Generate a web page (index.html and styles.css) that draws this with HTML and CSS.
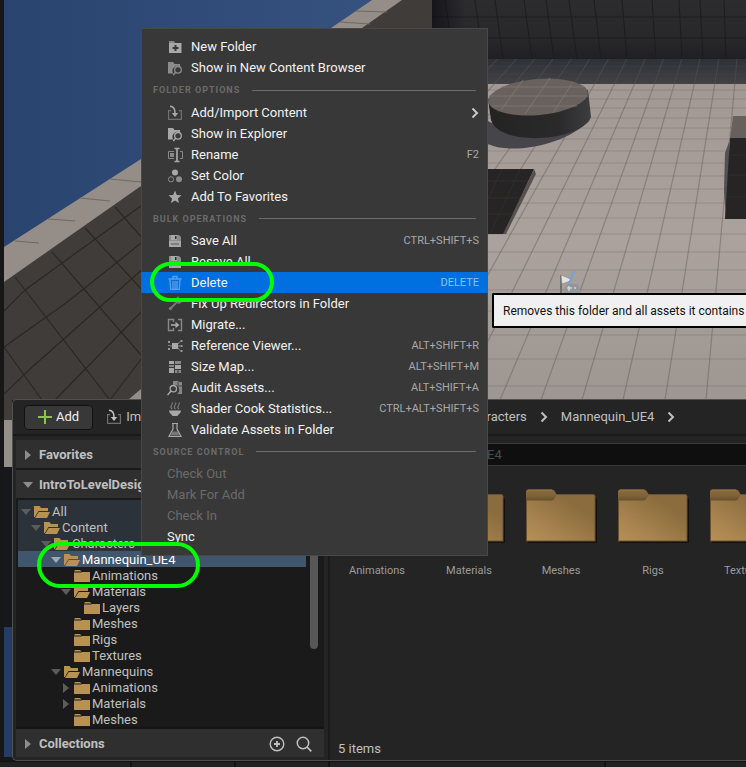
FILE: index.html
```html
<!DOCTYPE html>
<html lang="en">
<head>
<meta charset="utf-8">
<meta name="viewport" content="width=device-width, initial-scale=1">
<title>Content Browser</title>
<link rel="stylesheet" href="styles.css">
</head>
<body>
<svg class="defs" aria-hidden="true">
  <defs>
    <linearGradient id="tile-fill" x1="0" y1="1" x2="1" y2="0"><stop offset="0" stop-color="#b68f57"/><stop offset=".25" stop-color="#a98550"/><stop offset=".75" stop-color="#8b6c3e"/><stop offset="1" stop-color="#8b6c3e"/></linearGradient>
    <linearGradient id="tab-fill" x1="0" y1="0" x2="0" y2="1"><stop offset="0" stop-color="#8b6c3e"/><stop offset=".6" stop-color="#7d6138"/><stop offset="1" stop-color="#67502d"/></linearGradient>
    <symbol id="folder" viewBox="0 0 16 14"><path fill="#b89154" d="M0 3.500H7L8 3H16V13H0z"/><path fill="#b89154" d="M1 1H6L7.500 2.500H0z"/></symbol>
    <symbol id="folder-open" viewBox="0 0 16 14"><path fill="#b89154" d="M0 12V1H5.500L7 3H14V6H4.500L.8 12zM1 13L4.800 7H16L13 13z"/></symbol>
    <symbol id="tile" viewBox="0 0 72 54"><path fill="#111" d="M3 9H70.500L72 10V54H3z"/><path fill="#6b522e" d="M1 5H69l1.500 2V52.500H1z"/><path fill="url(#tile-fill)" d="M2 6H68.500l1 1V51.500H2z"/><path fill="url(#tab-fill)" d="M1 11V3q0-2.500 2.500-2.500H27q1.500 0 2.500 1.500L32 6l-2.500 3.500Q28.500 11.500 27 11.500H1z"/><path fill="none" stroke="#a58351" stroke-width=".6" d="M2 2Q2.500 1 4 1H27"/></symbol>
    <symbol id="import" viewBox="0 0 16 16"><path fill="none" stroke="#707070" stroke-width="1.200" d="M4 5.600H1.600V14.400H14.400V5.600H12"/><path fill="none" stroke="currentColor" stroke-width="1.500" d="M3 1.200Q8 1.500 8 8v3"/><path fill="currentColor" d="M4.800 8h6.400L8 12z"/></symbol>
    <symbol id="search-folder" viewBox="0 0 16 16"><path fill="currentColor" d="M1 2h5l1.500 2H13v2.500A5 5 0 0 0 6 13l-.5.500H1z"/><circle cx="11" cy="9.800" r="3.300" fill="none" stroke="currentColor" stroke-width="1.300"/><path stroke="currentColor" stroke-width="1.500" d="M8.700 12.200L6.200 15"/></symbol>
    <symbol id="save" viewBox="0 0 16 16"><path fill="#8c8c8c" d="M2 2H12L14 4V14H2z"/><path fill="currentColor" d="M2 8H14V14H2zM4 2H10V7H4z"/><path fill="#2c2c2c" d="M8 3h1.500v3H8z"/><path fill="#555" d="M4 10.500h8v1H4z"/></symbol>
    <symbol id="chevron" viewBox="0 0 8 12"><path fill="none" stroke="currentColor" stroke-width="2" d="M1.500 1.500L6 6l-4.500 4.500"/></symbol>
  </defs>
</svg>
<div class="app">
  <svg class="scene" viewBox="0 0 746 767" preserveAspectRatio="xMinYMin slice" aria-hidden="true">
    <defs>
      <linearGradient id="sky" x1="0" y1="0" x2="1" y2="0"><stop offset="0" stop-color="#29446f"/><stop offset="1" stop-color="#36527f"/></linearGradient>
      <linearGradient id="back" x1="0" y1="0" x2="0" y2="1"><stop offset="0" stop-color="#2c2c2f"/><stop offset=".65" stop-color="#28282b"/><stop offset="1" stop-color="#202024"/></linearGradient>
      <linearGradient id="shade" x1="0" y1="0" x2="0" y2="1"><stop offset="0" stop-color="#303136"/><stop offset="1" stop-color="#414146"/></linearGradient>
      <linearGradient id="ground" x1="0" y1="0" x2="0" y2="1"><stop offset="0" stop-color="#a29994"/><stop offset=".5" stop-color="#aba29d"/><stop offset="1" stop-color="#9e9691"/></linearGradient>
      <linearGradient id="drum" x1="0" y1="0" x2="1" y2="0"><stop offset="0" stop-color="#242324"/><stop offset=".7" stop-color="#2b2a2b"/><stop offset="1" stop-color="#3d3d40"/></linearGradient>
      <linearGradient id="corner" x1="0" y1="0" x2="1" y2="0"><stop offset="0" stop-color="#0c0c12" stop-opacity=".7"/><stop offset="1" stop-color="#0c0c12" stop-opacity="0"/></linearGradient>
      <clipPath id="ground-clip"><path d="M432 59H746V400H432z"/></clipPath>
      <clipPath id="wall-clip"><path d="M4 282L141 186 380 18V400H4z"/></clipPath>
    </defs>
    <path fill="#171717" d="M0 0H746V767H0z"/>
    <path fill="url(#sky)" d="M4 0H380V260H4z"/>
    <path fill="#403c3a" d="M4 280L141 186 400 0H432V400H4z"/>
    <path fill="#958d87" d="M4 247L141 159 331 28 372 0H402L362 28 141 186 4 282z"/>
    <path stroke="#6f6863" d="M15 241l24 2M48 219l27 2M80 198l30 3M110 179l31 3M340 22l30 2M355 11l32 1" fill="none"/>
    <g clip-path="url(#wall-clip)" fill="none" stroke="#2a2725" stroke-width="1.200">
      <path d="M15 277L110 400M52 252L160 377M85 228L145 293M115 207L150 247M4 347L66 303 145 240M4 311L25 290 145 203M55 400L145 308M4 394L30 369 145 267M4 347L42 400M110 400L145 354"/>
    </g>
    <path fill="#958d87" d="M128 400L141 389V400z"/>
    <path fill="url(#back)" d="M432 0H746V59H432z"/>
    <path fill="url(#shade)" d="M432 59H746V84H432z"/>
    <path fill="url(#ground)" d="M432 84H746V400H432z"/>
    <path fill="none" stroke="#1d1d20" d="M432 17H746M432 38H746M445 0l9 59M475 0l8 59M495 0l8 59M524 0l8 59M546 0l8 59M569 0l8 59M594 0l7 59M622 0l5 59M652 0l4 59M679 0l3 59M700 0l3 59M724 0l2 59"/>
    <g clip-path="url(#ground-clip)" fill="none" stroke="#5c5553">
      <path stroke-opacity=".42" stroke-width="1.200" d="M762-216L6 400M762-216L47 400M762-216L88 400M762-216L129 400M762-216L170 400M762-216L212 400M762-216L253 400M762-216L294 400M762-216L335 400M762-216L376 400M762-216L418 400M762-216L459 400M762-216L500 400M762-216L541 400M762-216L582 400M762-216L623 400M762-216L665 400M762-216L706 400M762-216L747 400"/>
      <path stroke-opacity=".25" d="M432 66H746M432 74H746M432 90H746M432 99H746M432 108H746M432 118H746M432 128H746M432 139H746M432 151H746M432 163H746M432 176H746M432 189H746M432 203H746M432 218H746M432 234H746M432 252H746M432 270H746M432 290H746M432 311H746M432 335H746M432 359H746M432 386H746"/>
    </g>
    <path fill="#46464a" d="M488 121C500 130 565 132 590 120 565 146 510 155 488 144z"/>
    <path fill="url(#drum)" d="M488 99L491 120C500 148 582 141 591 117L588 90z"/>
    <ellipse cx="538" cy="97" rx="50" ry="18" transform="rotate(-5 538 97)" fill="#69615d"/>
    <path stroke="#7e7570" fill="none" d="M523 80L501 110M550 78L525 114M573 82L553 113M502 87H584M489 96H588M492 106H577"/>
    <path fill="#262424" d="M488 169H534L504 234H488z"/><path fill="#57514e" d="M534 169l2 5-30 60h-3z"/>
    <path fill="none" stroke="#302d2c" d="M488 181H528M488 198H520M488 214H513M502 169l-14 30M520 169l-30 65"/>
    <path fill="#505055" d="M729 142L725 153 724 190 726 218 731 218z"/>
    <path fill="#68605c" d="M733 116H746V139H730z"/><path fill="#262424" d="M730 138H746V219H725z"/>
    <path stroke="#302d2c" d="M730 155H746M729 175H746M727 197H746"/>
    <path fill="url(#corner)" d="M432 0H465V59H432z"/>
    <path fill="none" stroke="#74716f" stroke-width="2" d="M561 275v18"/><path fill="#e4e2e0" stroke="#8a8785" stroke-width=".6" d="M561 275l12 5-11 4z"/><path stroke="#6fa3dd" stroke-width="2" d="M569 284l5-13"/>
    <path fill="#92979b" d="M564 294q1-9 4-10h8q4 1 5 10z"/><path stroke="#eee" d="M567 288h5M569 286v5M574 288h2"/>
    <path fill="#403c3a" d="M4 400H12V430H4z"/><path fill="#968e88" d="M4 420H12V467H4z"/><path fill="#17181b" d="M4 467H12V627H4z"/><path fill="#233d66" d="M4 627H12V757H4z"/>
  </svg>

  <div class="viewport"></div>

  <section class="drawer" aria-label="Content Browser">
    <header class="toolbar">
      <button class="add" type="button"><svg width="14" height="14" viewBox="0 0 14 14"><path stroke="#8bc24a" stroke-width="2" d="M7 0V14M0 7H14"/></svg>Add</button>
      <button class="import" type="button"><svg width="16" height="16"><use href="#import"/></svg>Import</button>
      <nav class="crumbs" aria-label="Path">
        <a href="#">Characters</a><svg width="8" height="12"><use href="#chevron"/></svg>
        <a href="#">Mannequin_UE4</a><svg width="8" height="12"><use href="#chevron"/></svg>
      </nav>
    </header>
    <div class="body">
      <aside class="sidebar">
        <button class="group" type="button"><i class="tri right"></i>Favorites</button>
        <button class="group" type="button"><i class="tri down"></i>IntroToLevelDesign</button>
        <div class="tree-box">
          <ul class="tree">
            <li class="row l0 ancestor"><i class="tri down"></i><svg><use href="#folder-open"/></svg>All</li>
            <li class="row l1 ancestor"><i class="tri down"></i><svg><use href="#folder-open"/></svg>Content</li>
            <li class="row l2 ancestor"><i class="tri down"></i><svg><use href="#folder-open"/></svg>Characters</li>
            <li class="row l3 selected"><i class="tri down"></i><svg><use href="#folder-open"/></svg>Mannequin_UE4</li>
            <li class="row l4"><i class="tri"></i><svg><use href="#folder"/></svg>Animations</li>
            <li class="row l4"><i class="tri down"></i><svg><use href="#folder-open"/></svg>Materials</li>
            <li class="row l5"><i class="tri"></i><svg><use href="#folder"/></svg>Layers</li>
            <li class="row l4"><i class="tri"></i><svg><use href="#folder"/></svg>Meshes</li>
            <li class="row l4"><i class="tri"></i><svg><use href="#folder"/></svg>Rigs</li>
            <li class="row l4"><i class="tri"></i><svg><use href="#folder"/></svg>Textures</li>
            <li class="row l3"><i class="tri down"></i><svg><use href="#folder-open"/></svg>Mannequins</li>
            <li class="row l4"><i class="tri right"></i><svg><use href="#folder"/></svg>Animations</li>
            <li class="row l4"><i class="tri right"></i><svg><use href="#folder"/></svg>Materials</li>
            <li class="row l4"><i class="tri"></i><svg><use href="#folder"/></svg>Meshes</li>
          </ul>
          <div class="scrollbar"></div>
        </div>
        <div class="group">
          <i class="tri right"></i><span class="grow">Collections</span>
          <button class="tool" type="button" aria-label="Add collection"><svg width="16" height="16" viewBox="0 0 16 16"><circle cx="8" cy="8" r="6.800" fill="none" stroke="currentColor" stroke-width="1.400"/><path stroke="currentColor" stroke-width="1.800" d="M8 5v6M5 8h6"/></svg></button>
          <button class="tool" type="button" aria-label="Search collections"><svg width="16" height="16" viewBox="0 0 16 16"><circle cx="7" cy="7" r="5.700" fill="none" stroke="currentColor" stroke-width="1.500"/><path stroke="currentColor" stroke-width="1.700" d="M11 11l4.300 4.300"/></svg></button>
        </div>
      </aside>
      <main class="assets">
        <input class="search" type="text" placeholder="Search Mannequin_UE4" aria-label="Search Mannequin_UE4">
        <ul class="tiles">
          <li><svg><use href="#tile"/></svg>Animations</li>
          <li><svg><use href="#tile"/></svg>Materials</li>
          <li><svg><use href="#tile"/></svg>Meshes</li>
          <li><svg><use href="#tile"/></svg>Rigs</li>
          <li><svg><use href="#tile"/></svg>Textures</li>
        </ul>
        <p class="count">5 items</p>
      </main>
    </div>
  </section>
  <footer class="status"><span></span><span></span><span></span><span></span><span></span></footer>

  <div class="menu" role="menu">
    <button class="item" role="menuitem"><svg viewBox="0 0 16 16"><path fill="#888" d="M2 2h5l1 2H2z"/><path fill="currentColor" fill-rule="evenodd" d="M2 4H14.500V14H2zM7.500 6v2h-2v2h2v2h2v-2h2V8h-2V6z"/></svg>New Folder</button>
    <button class="item" role="menuitem"><svg viewBox="0 0 16 16" class="dim"><use href="#search-folder"/></svg>Show in New Content Browser</button>
    <div class="section first">FOLDER OPTIONS</div>
    <button class="item" role="menuitem"><svg viewBox="0 0 16 16"><use href="#import"/></svg>Add/Import Content<svg class="more"><use href="#chevron"/></svg></button>
    <button class="item" role="menuitem"><svg viewBox="0 0 16 16"><use href="#search-folder"/></svg>Show in Explorer</button>
    <button class="item" role="menuitem"><svg viewBox="0 0 16 16"><path fill="none" stroke="#888" d="M7 4.500H1.500v7H7M13 4.500h2.500v7H13"/><path fill="#888" d="M3 6h4v4H3z"/><path fill="none" stroke="currentColor" stroke-width="1.700" d="M7.500 1.500h5M10 1.500v13M7.500 14.500h5"/></svg>Rename<kbd>F2</kbd></button>
    <button class="item" role="menuitem"><svg viewBox="0 0 16 16"><circle cx="8" cy="4.500" r="3" fill="currentColor"/><circle cx="4" cy="11.300" r="2.600" fill="none" stroke="#8c8c8c"/><circle cx="12" cy="11.300" r="3" fill="#8c8c8c"/></svg>Set Color</button>
    <button class="item" role="menuitem"><svg viewBox="0 0 16 16"><path fill="currentColor" d="M8 1.500l1.800 4.400 4.700.4-3.600 3.100 1.100 4.600L8 11.500 4 14l1.100-4.600L1.500 6.300l4.700-.4z"/></svg>Add To Favorites</button>
    <div class="section">BULK OPERATIONS</div>
    <button class="item" role="menuitem"><svg viewBox="0 0 16 16"><use href="#save"/></svg>Save All<kbd>CTRL+SHIFT+S</kbd></button>
    <button class="item" role="menuitem"><svg viewBox="0 0 16 16"><use href="#save"/></svg>Resave All</button>
    <button class="item active" role="menuitem"><svg viewBox="0 0 16 16"><path fill="none" stroke="currentColor" stroke-width="1.400" d="M1.500 4H14.500M6 3.500V1.500h4v2"/><path fill="none" stroke="currentColor" stroke-width="1.300" d="M3 5l.7 9.300h8.600L13 5M6 6v8M8 6v8M10 6v8"/></svg>Delete<kbd>DELETE</kbd></button>
    <button class="item" role="menuitem"><svg viewBox="0 0 16 16" class="wrench"><path stroke="currentColor" stroke-width="2" d="M3 13l8.500-8.500"/><circle cx="3.500" cy="12.500" r="1.700" fill="currentColor"/><path fill="none" stroke="currentColor" stroke-width="2" d="M14.500 3.500a2.600 2.600 0 1 1-2.500-2"/></svg>Fix Up Redirectors in Folder</button>
    <button class="item" role="menuitem"><svg viewBox="0 0 16 16"><path fill="none" stroke="#888" stroke-width="1.400" d="M6.500 5V2.500H1.500v11h5V11M11 2.500h3.500v11H11"/><path stroke="currentColor" stroke-width="1.600" d="M4 8h6"/><path fill="currentColor" d="M8.500 4.800L12.500 8l-4 3.200z"/></svg>Migrate...</button>
    <button class="item" role="menuitem"><svg viewBox="0 0 16 16"><path fill="currentColor" d="M5 5h6v6H5z"/><path fill="#999" d="M1 3h2v2H1zM1 10h2v2H1zM13.500 2h2v2h-2zM13.500 7h2v2h-2zM13.500 12h2v2h-2z"/><path stroke="#888" fill="none" d="M3 8h2M1 7.500h2M11 8h2M13 3.500L11 6M13 12.500L11 10"/></svg>Reference Viewer...<kbd>ALT+SHIFT+R</kbd></button>
    <button class="item" role="menuitem"><svg viewBox="0 0 16 16"><path fill="currentColor" d="M2 2h5v3H2zM2 9h5v5H2zM8 6h6v4H8z"/><path fill="#888" d="M2 6h5v2H2zM8 2h6v3H8zM8 11h2.500v3H8zM11.500 11H14v3h-2.500z"/></svg>Size Map...<kbd>ALT+SHIFT+M</kbd></button>
    <button class="item" role="menuitem"><svg viewBox="0 0 16 16"><path fill="#888" d="M6 1h5l1 1h3v12h-5a5 5 0 0 0-4-9z"/><path stroke="#444" fill="none" d="M11 2v4h4"/><circle cx="6.300" cy="8.700" r="3.200" fill="#383838" stroke="currentColor" stroke-width="1.300"/><path stroke="currentColor" stroke-width="1.500" d="M4 11l-3.500 4"/></svg>Audit Assets...<kbd>ALT+SHIFT+A</kbd></button>
    <button class="item" role="menuitem"><svg viewBox="0 0 16 16"><path fill="currentColor" d="M2 9.500H14q0 2-2.500 4L10.500 15h-5l-1-1.500Q2 11.500 2 9.500z"/><path fill="none" stroke="#808080" stroke-width="1.100" d="M5 8q-2-1.500-.5-3.500T5 1.500M8.500 8Q6.500 6.500 8 4.500T8.500 1.500M12 8q-2-1.500-.5-3.500t.5-3"/></svg>Shader Cook Statistics...<kbd>CTRL+ALT+SHIFT+S</kbd></button>
    <button class="item" role="menuitem"><svg viewBox="0 0 16 16"><path fill="none" stroke="currentColor" stroke-width="1.200" d="M5 1.500h6M6 2v5L2 14.500H14L10 7V2"/><path fill="#777" d="M5.500 9.500h5l2 4h-9z"/></svg>Validate Assets in Folder</button>
    <div class="section">SOURCE CONTROL</div>
    <button class="item plain" role="menuitem" disabled>Check Out</button>
    <button class="item plain" role="menuitem" disabled>Mark For Add</button>
    <button class="item plain" role="menuitem" disabled>Check In</button>
    <button class="item plain" role="menuitem">Sync</button>
  </div>
  <div class="tooltip" role="tooltip">Removes this folder and all assets it contains</div>
  <div class="ring ring-delete"></div>
  <div class="ring ring-folder"></div>
</div>
</body>
</html>
```
FILE: styles.css
```css
* { box-sizing: border-box; }
body { margin: 0; background: #171717; color: #c0c0c0; font: 13px/16px Roboto, "Liberation Sans", sans-serif; }
button, input { font: inherit; color: inherit; border: 0; background: none; padding: 0; margin: 0; }
ul { list-style: none; margin: 0; padding: 0; }
a { color: inherit; text-decoration: none; }
svg { flex: none; display: block; }
.defs { position: absolute; width: 0; height: 0; }

.app { position: relative; display: flex; flex-direction: column; height: 100vh; overflow: hidden; }
.scene { position: absolute; inset: 0; width: 100%; height: 100%; }
.viewport { flex: 1; }

/* Drawer */
.drawer { position: relative; display: flex; flex-direction: column; margin-left: 12px; background: #242424; border: 1px solid #505050; border-right: 0; border-radius: 5px 0 0 5px; }
.toolbar { display: flex; align-items: center; height: 36px; padding: 0 11px; border-bottom: 2px solid #1a1a1a; white-space: nowrap; }
.add { display: flex; align-items: center; gap: 4px; height: 25px; padding: 0 13px; background: #383838; border: 1px solid #121212; border-radius: 4px; color: #f0f0f0; }
.import { display: flex; align-items: center; gap: 4px; margin-left: 13px; }
.crumbs { display: flex; align-items: center; gap: 13px; margin-left: 299px; }
.body { display: grid; grid-template-columns: 308px 1fr; gap: 4px; padding-left: 3px; }
.sidebar { display: flex; flex-direction: column; gap: 2px; padding: 4px 0 3px; }
.group { display: flex; align-items: center; gap: 4px; height: 28px; padding: 2px 12px 0 4px; background: #2f2f2f; font-weight: bold; text-align: left; box-shadow: 0 2px #1a1a1a; }
.group:last-child { box-shadow: 0 -2px #151515; }
.grow { flex: 1; }
.tool { margin-left: 7px; }

.tri { display: flex; align-items: center; justify-content: center; width: 16px; height: 16px; flex: none; }
.group .tri { width: 15px; }
.tri::before { content: ""; border: 5px solid transparent; }
.tri.down::before { border-top: 6px solid #8c8c8c; border-bottom: 0; }
.tri.right::before { border-left: 6px solid #8c8c8c; border-right: 0; }
.tree .tri.down::before { border-top-color: #5c5c5c; }
.tree .tri.right::before { border-left-color: #5c5c5c; }
.tree .selected .tri.down::before { border-top-color: #a0a9b2; }

.tree-box { display: grid; grid-template-columns: 288px 8px; gap: 4px; padding: 0 0 0 2px; background: #1a1a1a; }
.row { display: flex; align-items: center; height: 16px; padding-top: 2px; }
.row svg { width: 16px; height: 14px; margin-right: 2px; }
.l0 { height: 19px; padding-top: 5px; }
.l1 { padding-left: 10px; }
.l2 { padding-left: 20px; }
.l3 { padding-left: 30px; }
.l4 { padding-left: 40px; }
.l5 { padding-left: 50px; }
.ancestor { background: #2b323a; }
.selected { background: #40566d; color: #fff; }
.scrollbar { height: 149px; background: #575757; border-radius: 4px; }

.assets { display: flex; flex-direction: column; min-width: 0; overflow: hidden; border-left: 2px solid #1a1a1a; padding-top: 7px; }
.search { height: 23px; margin-left: 6px; padding: 0 28px; background: #0f0f0f; border: 1px solid #383838; border-right: 0; }
.search::placeholder { color: #4d4d4d; opacity: 1; }
.tiles { display: flex; flex: 1; padding: 23px 0 0 1px; }
.tiles li { flex: none; width: 92px; display: flex; flex-direction: column; align-items: center; gap: 20px; font-size: 11px; color: #9c9c9c; }
.tiles svg { width: 72px; height: 54px; }
.count { margin: 0; padding: 4px 8px 3px; }

.status { position: relative; display: grid; grid-template-columns: 130px 102px 92px 274px 1fr; gap: 2px; height: 6px; background: #121212; padding-top: 1px; }
.status span { background: #212121; }

/* Context menu */
.menu { position: absolute; left: 141px; top: 28px; display: flex; flex-direction: column; width: 347px; padding: 7px 0 8px; background: #383838; border: 1px solid #484848; color: #f2f2f2; }
.item { display: flex; align-items: center; gap: 8px; height: 21px; padding: 0 8px 0 25px; text-align: left; white-space: nowrap; }
.item svg { width: 16px; height: 16px; color: #a8a8a8; }
.item svg.dim { color: #8c8c8c; }
.item svg.wrench { color: #777; }
.item svg.more { width: 8px; height: 12px; margin-left: auto; color: #c8c8c8; }
.item kbd { margin-left: auto; font: 11px/16px Roboto, sans-serif; color: #a8a8a8; }
.item:disabled { color: #6b6b6b; }
.item.active { margin: 0 -1px; padding: 0 9px 0 26px; background: #0070e0; }
.item.active svg { color: #5b9fe6; }
.item.active kbd { color: #8dc0f2; }
.section { display: flex; align-items: center; gap: 12px; height: 23px; padding: 0 11px; color: #6b6b6b; font-size: 9px; font-weight: bold; letter-spacing: 1px; }
.section.first { height: 24px; }
.section::after { content: ""; flex: 1; height: 1px; background: #6b6b6b; }

.tooltip { position: absolute; left: 492px; right: 0; top: 293px; height: 35px; padding: 8px 9px; overflow: hidden; background: #f0f0f0; border: 2px solid #000; border-right: 0; border-radius: 2px 0 0 2px; color: #111; font-size: 12px; white-space: nowrap; }

.ring { position: absolute; border: 4px solid #00ff00; border-radius: 24px; pointer-events: none; }
.ring-delete { left: 150px; top: 262px; width: 124px; height: 40px; }
.ring-folder { left: 37px; top: 542px; width: 163px; height: 46px; }
```
